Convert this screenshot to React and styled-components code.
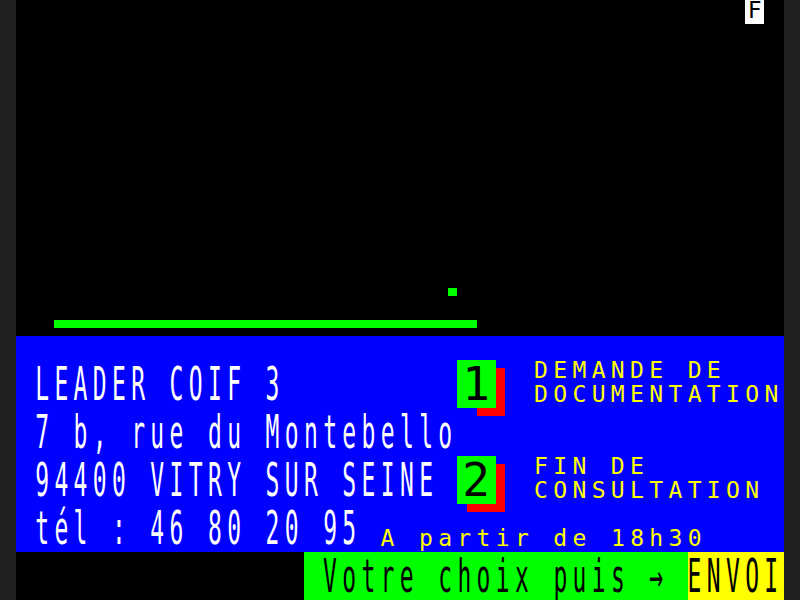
import styled, { createGlobalStyle } from 'styled-components';

// minitel screen: 40 x 25 character cells, each cell split in 2 x 3 mosaic blocks
// grid units are mosaic blocks (9.6px x 8px), so a character is 2 cols x 3 rows

const leftLines = [
  { row: 15, text: 'LEADER COIF 3' },
  { row: 17, text: '7 b, rue du Montebello' },
  { row: 19, text: '94400 VITRY SUR SEINE' },
  { row: 21, text: 'tél : 46 80 20 95' },
];

export default function App() {
  return (
    <>
      <GlobalStyle />
      <Frame>
        <Screen>
          <Badge $c={38} $r={0}>F</Badge>

          <Block $x={45} $y={36} $w={1} $h={1} $bg="#00ff00" />
          <Block $x={4} $y={40} $w={44} $h={1} $bg="#00ff00" />

          <Block $x={0} $y={42} $w={80} $h={27} $bg="#0000ff" />

          {leftLines.map((l) => (
            <Line key={l.row} $c={1} $r={l.row} $double $color="#ffffff">
              {l.text}
            </Line>
          ))}

          <Block $x={48} $y={46} $w={3} $h={6} $bg="#ff0000" />
          <Digit $c={23} $r={15}><DigitGlyph>1</DigitGlyph></Digit>
          <Line $c={27} $r={15} $color="#ffff00">DEMANDE DE</Line>
          <Line $c={27} $r={16} $color="#ffff00">DOCUMENTATION</Line>

          <Block $x={47} $y={58} $w={4} $h={6} $bg="#ff0000" />
          <Digit $c={23} $r={19}><DigitGlyph>2</DigitGlyph></Digit>
          <Line $c={27} $r={19} $color="#ffff00">FIN DE</Line>
          <Line $c={27} $r={20} $color="#ffff00">CONSULTATION</Line>

          <Line $c={19} $r={22} $color="#ffff00">A partir de 18h30</Line>

          <Prompt $c={15} $w={20} $bg="#00ff00">
            <DoubleText> Votre choix puis →</DoubleText>
          </Prompt>
          <Prompt $c={35} $w={5} $bg="#ffff00">
            <DoubleText>ENVOI</DoubleText>
          </Prompt>
        </Screen>
      </Frame>
    </>
  );
}

const GlobalStyle = createGlobalStyle`
  html, body {
    margin: 0;
    padding: 0;
    background: #202020;
  }
`;

const Frame = styled.div`
  width: 800px;
  height: 600px;
  display: flex;
  justify-content: center;
  background: #202020;
`;

const Screen = styled.div`
  display: grid;
  grid-template-columns: repeat(80, 9.6px);
  grid-template-rows: repeat(75, 8px);
  width: 768px;
  height: 600px;
  background: #000;
  overflow: hidden;
  font-family: "DejaVu Sans Mono", monospace;
  font-size: 23px;
  letter-spacing: 5.35px;
`;

const Block = styled.div`
  grid-column: ${({ $x }) => $x + 1} / span ${({ $w }) => $w};
  grid-row: ${({ $y }) => $y + 1} / span ${({ $h }) => $h};
  background: ${({ $bg }) => $bg};
`;

const Line = styled.div`
  grid-column: ${({ $c }) => $c * 2 + 1} / -1;
  grid-row: ${({ $r }) => $r * 3 + 1} / span ${({ $double }) => ($double ? 6 : 3)};
  color: ${({ $color }) => $color};
  white-space: pre;
  line-height: ${({ $double }) => ($double ? '24px' : '21px')};
  transform: ${({ $double }) => ($double ? 'scaleY(2)' : 'none')};
  transform-origin: top left;
`;

const Badge = styled.div`
  grid-column: ${({ $c }) => $c * 2 + 1} / span 2;
  grid-row: ${({ $r }) => $r * 3 + 1} / span 3;
  background: #fff;
  color: #000;
  line-height: 21px;
  letter-spacing: 0;
  text-align: center;
`;

const Digit = styled.div`
  grid-column: ${({ $c }) => $c * 2 + 1} / span 4;
  grid-row: ${({ $r }) => $r * 3 + 1} / span 6;
  background: #00ff00;
  color: #000;
`;

const DigitGlyph = styled.div`
  width: 19.2px;
  line-height: 24px;
  letter-spacing: 0;
  text-align: center;
  transform: scale(2);
  transform-origin: top left;
`;

const Prompt = styled.div`
  grid-column: ${({ $c }) => $c * 2 + 1} / span ${({ $w }) => $w * 2};
  grid-row: 70 / span 6;
  background: ${({ $bg }) => $bg};
  color: #000;
`;

const DoubleText = styled.div`
  white-space: pre;
  line-height: 24px;
  transform: scaleY(2);
  transform-origin: top left;
`;
